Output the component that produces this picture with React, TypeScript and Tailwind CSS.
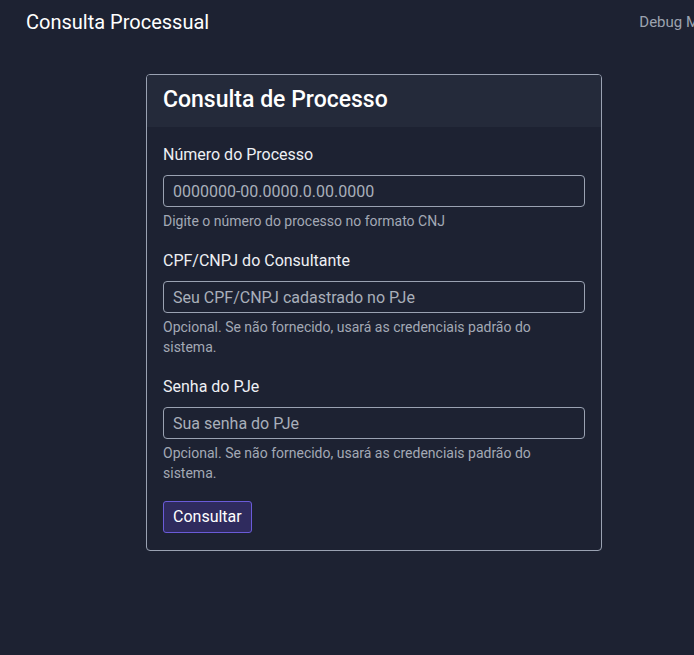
import React from 'react';

const fields = [
    {
        label: 'Número do Processo',
        placeholder: '0000000-00.0000.0.00.0000',
        type: 'text',
        help: 'Digite o número do processo no formato CNJ',
    },
    {
        label: 'CPF/CNPJ do Consultante',
        placeholder: 'Seu CPF/CNPJ cadastrado no PJe',
        type: 'text',
        help: 'Opcional. Se não fornecido, usará as credenciais padrão do sistema.',
    },
    {
        label: 'Senha do PJe',
        placeholder: 'Sua senha do PJe',
        type: 'password',
        help: 'Opcional. Se não fornecido, usará as credenciais padrão do sistema.',
    },
];

const App = () => {
    return (
        <div className="min-h-screen bg-[#1d2232] font-['Roboto',sans-serif] overflow-hidden">
            <div className="w-[748px]">
                <nav className="h-11 flex items-center justify-between pl-[26px] pr-6">
                    <span className="text-[20px] text-white">Consulta Processual</span>
                    <span className="text-[15px] text-[#9ca3af]">Debug Mode</span>
                </nav>

                <div className="flex justify-center mt-[30px]">
                    <div className="w-[456px] border border-[#9aa2b2] rounded-[4px] overflow-hidden">
                        <div className="bg-[#242a3a] px-4 pt-[11px] pb-[13px]">
                            <h2 className="text-[23px] leading-7 font-medium text-white">Consulta de Processo</h2>
                        </div>
                        <form className="px-4 pt-4 pb-[17px]" onSubmit={(e) => e.preventDefault()}>
                            {fields.map((f) => (
                                <div key={f.label} className="mb-[18px]">
                                    <label className="block text-[16px] leading-6 text-[#eef0f4] mb-2">{f.label}</label>
                                    <input
                                        type={f.type}
                                        placeholder={f.placeholder}
                                        className="block w-full h-8 px-[9px] bg-transparent border border-[#9aa2b2] rounded-[4px] text-[16px] text-white placeholder:text-[#a9afba] outline-none"
                                    />
                                    <p className="mt-1 text-[14px] leading-5 text-[#a3a9b5]">{f.help}</p>
                                </div>
                            ))}
                            <button
                                type="submit"
                                className="h-8 px-[9px] bg-[#2f2b5e] border border-[#6a5bd8] rounded-[3px] text-[16px] text-white"
                            >
                                Consultar
                            </button>
                        </form>
                    </div>
                </div>
            </div>
        </div>
    );
};

export default App;
